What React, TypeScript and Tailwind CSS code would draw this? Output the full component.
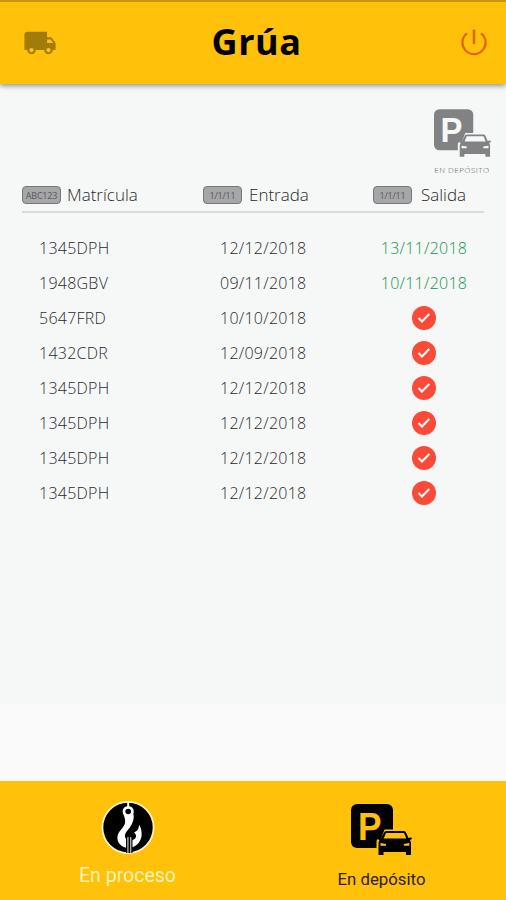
import { MdLocalShipping } from "react-icons/md";

type Row = { plate: string; entry: string; exit?: string };

const rows: Row[] = [
	{ plate: "1345DPH", entry: "12/12/2018", exit: "13/11/2018" },
	{ plate: "1948GBV", entry: "09/11/2018", exit: "10/11/2018" },
	{ plate: "5647FRD", entry: "10/10/2018" },
	{ plate: "1432CDR", entry: "12/09/2018" },
	{ plate: "1345DPH", entry: "12/12/2018" },
	{ plate: "1345DPH", entry: "12/12/2018" },
	{ plate: "1345DPH", entry: "12/12/2018" },
	{ plate: "1345DPH", entry: "12/12/2018" },
];

function PowerIcon() {
	return (
		<svg
			viewBox="0 0 26 28"
			className="h-7 w-[26px] text-[#e2620f]"
			fill="none"
			stroke="currentColor"
			strokeWidth="2.2"
		>
			<path d="M13 0.5v14.5" strokeWidth="2.6" />
			<path d="M6 4.3a11.6 11.6 0 1 0 14 0" />
		</svg>
	);
}

function ParkingIcon({ className, bg }: { className: string; bg: string }) {
	return (
		<svg viewBox="0 0 61 52" className={className} fill="currentColor">
			<rect x="0" y="0" width="42" height="44" rx="6" />
			<text
				x="7"
				y="35.5"
				fontSize="38"
				fontWeight="700"
				fontFamily="Liberation Sans, Arial, sans-serif"
				fill={bg}
				textLength="23.500"
				lengthAdjust="spacingAndGlyphs"
			>
				P
			</text>
			<path
				d="M33.500 25.500H43v20H25.500V37l1.500-2.500h3z"
				fill={bg}
			/>
			<path d="M33 28.500q.5-1.500 2-1.500h18q1.500 0 2 1.500l2.500 5.500 2-.6q1.500 0 1.500 1.200 0 1-2 1.400l1 2.500V51h-5v-3H32.500v3h-5V38.500l1-2.500q-2-.4-2-1.400 0-1.200 1.500-1.200l2 .6z" />
			<path d="M35 29h18l2.300 5.500H32.700z" fill={bg} />
			<path
				d="M29.500 39l5.500 1v1.800h-5.500zM58.300 39l-5.500 1v1.800h5.500z"
				fill={bg}
			/>
		</svg>
	);
}

function HookIcon() {
	return (
		<svg viewBox="0 0 54 56" className="h-14 w-[54px]">
			<circle cx="27" cy="27.500" r="25.600" fill="#000" stroke="#fff3c4" strokeWidth="1.800" />
			<path d="M26.200 2h2v6h-2z" fill="#fff" />
			<path
				d="M22.500 14q5 4 10 0c1 6-1.500 10-4 14C26 31 23.500 33.500 24 37c1 4.500 9.500 4.500 11 0 .6-3-2-4.500-2-4.500C37 31 38 28 38 24.500c2.500 4 3 8 2.500 12C39.500 42 35 47.500 28 48 20 48 15.500 42 16.500 36c1.300-5.500 6.500-8 7.500-13 .6-3.500-.5-5.500-1.500-9z"
				fill="#fff"
			/>
			<circle cx="27.200" cy="11.500" r="4.200" fill="#000" stroke="#fff" strokeWidth="2.800" />
			<path d="M25 36h6.500v17H25z" fill="#000" />
			<path d="M26.200 37h1.400v16h-1.400zM29 37h1.400v16H29z" fill="#aaa" />
		</svg>
	);
}

function Tag({ children }: { children: string }) {
	return (
		<span className="flex h-[18px] w-[39px] shrink-0 items-center justify-center rounded-[4px] border border-[#78787a] bg-[#a6a6a8] pt-px text-[9px] font-normal tracking-tight text-[#59595c]">
			{children}
		</span>
	);
}

function CheckBadge() {
	return (
		<span className="flex size-6 items-center justify-center rounded-full bg-[#fb4b38]">
			<svg
				viewBox="0 0 14 12"
				className="h-3 w-3.5"
				fill="none"
				stroke="#fff"
				strokeWidth="2"
			>
				<path d="M1.500 6l3.500 3.500L12.300 2" />
			</svg>
		</span>
	);
}

export default function App() {
	return (
		<div className="flex h-[900px] w-[506px] flex-col overflow-hidden bg-[#fafafa] font-['Open_Sans',sans-serif]">
			<header className="z-10 flex h-[84px] shrink-0 items-center justify-between border-t-2 border-[#c7950d] bg-[#ffc109] pr-[19px] pl-[23px] shadow-[0_2px_5px_rgba(0,0,0,0.4)]">
				<MdLocalShipping className="size-[34px] text-[#a17c08]" />
				<h1 className="pr-[5px] pb-[3px] text-[36px] leading-none font-[680] tracking-[0.5px] text-black">
					Grúa
				</h1>
				<PowerIcon />
			</header>

			<main className="flex h-[620px] shrink-0 flex-col bg-[#f6f8f8]">
				<div className="mt-[25px] mr-[14px] flex w-[60px] flex-col items-center self-end text-[#828284]">
					<ParkingIcon className="h-[49px] w-[57px]" bg="#f6f8f8" />
					<span className="mt-[6px] text-[8px] leading-[12px] font-light tracking-[0.5px] whitespace-nowrap text-[#555]">
						EN DEPÓSITO
					</span>
				</div>

				<div className="mx-[22px] mt-[7px] flex h-[30px] items-start border-b-2 border-[#d9dbdb] text-[17px] leading-[24px] font-[350] text-[#2a2a2a]">
					<div className="flex w-[181px] items-center gap-[6px]">
						<Tag>ABC123</Tag>
						<span>Matrícula</span>
					</div>
					<div className="flex w-[170px] items-center gap-[7px]">
						<Tag>1/1/11</Tag>
						<span>Entrada</span>
					</div>
					<div className="flex items-center gap-[9px]">
						<Tag>1/1/11</Tag>
						<span>Salida</span>
					</div>
				</div>

				<ul className="mt-[17px] text-[16px] font-[350] text-[#2a2a2a]">
					{rows.map((row, i) => (
						<li key={i} className="flex h-[35.1px] items-center pl-[39px]">
							<span className="w-[181px] tracking-[0.25px]">{row.plate}</span>
							<span className="w-[154px] tracking-[0.25px]">{row.entry}</span>
							<span className="flex w-[100px] justify-center tracking-[0.25px] text-[#159447]">
								{row.exit ?? <CheckBadge />}
							</span>
						</li>
					))}
				</ul>
			</main>

			<nav className="mt-auto grid h-[119px] grid-cols-2 bg-[#ffc109] font-[Roboto,sans-serif]">
				<button className="flex flex-col items-center pt-[19px] pl-[2px] text-[19.500px] leading-6 text-[#fff3b8]">
					<HookIcon />
					<span className="mt-[8px]">En proceso</span>
				</button>
				<button className="flex flex-col items-center pt-[23px] pl-[4px] text-[16.800px] leading-6 text-[#2e2105]">
					<ParkingIcon className="h-[52px] w-[61px] text-black" bg="#ffc109" />
					<span className="mt-[11px]">En depósito</span>
				</button>
			</nav>
		</div>
	);
}
